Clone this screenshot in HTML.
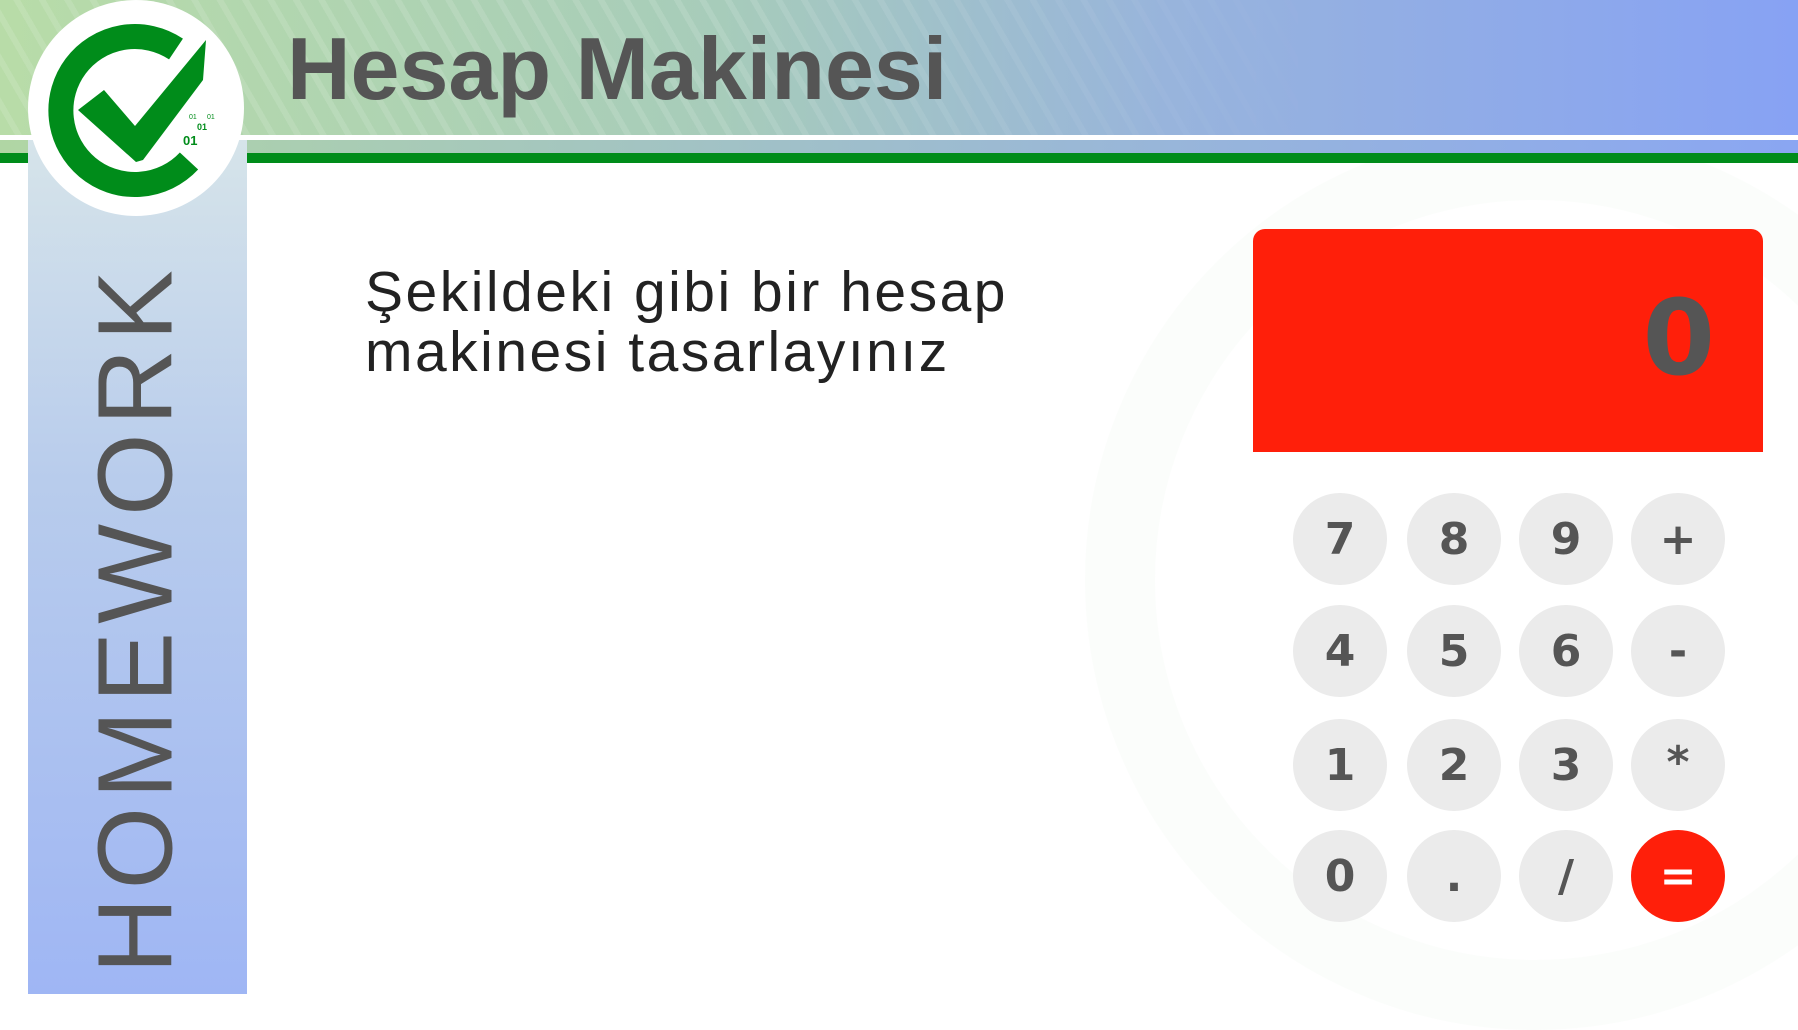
<!DOCTYPE html>
<html><head><meta charset="utf-8"><style>
html,body{margin:0;padding:0}
body{width:1798px;height:994px;position:relative;overflow:hidden;background:#fff;font-family:"Liberation Sans",sans-serif}
.hdr{position:absolute;left:0;top:0;width:1798px;height:135px;background:linear-gradient(90deg,#b8dca8 0%,#a7ccba 40%,#98b4dc 65%,#87a2f4 100%)}
.stripes{position:absolute;left:0;top:0;width:1798px;height:153px;background:repeating-linear-gradient(60deg,rgba(255,255,255,0.12) 0 6px,rgba(255,255,255,0) 6px 22px);-webkit-mask-image:linear-gradient(90deg,#000 0%,#000 40%,transparent 75%);mask-image:linear-gradient(90deg,#000 0%,#000 40%,transparent 75%)}
.wl{position:absolute;left:0;top:135px;width:1798px;height:5px;background:#fff}
.band{position:absolute;left:0;top:140px;width:1798px;height:13px;background:linear-gradient(90deg,#b0d6a4,#9ab8d6 60%,#8aa6f2)}
.gl{position:absolute;left:0;top:153px;width:1798px;height:10px;background:#008c1a}
.side{position:absolute;left:28px;top:140px;width:219px;height:854px;background:linear-gradient(180deg,#d6e4ea 0%,#b8ccec 40%,#9fb6f4 100%)}
.hw{position:absolute;left:136px;top:618px;transform:translate(-50%,-50%) rotate(-90deg);font-size:106px;color:#555;letter-spacing:8px;white-space:nowrap;font-weight:300}
.title{position:absolute;left:287px;top:19px;font-size:88px;font-weight:bold;color:#555;line-height:100px}
.body{position:absolute;left:365px;top:262px;font-size:57px;color:#222;line-height:60px;letter-spacing:2.5px}
.disp{position:absolute;left:1253px;top:229px;width:510px;height:223px;background:#ff1f0a;border-radius:12px 12px 0 0}
.disp span{position:absolute;right:48px;top:48px;font-size:104px;font-weight:bold;color:#555;font-family:"DejaVu Sans","Liberation Sans",sans-serif}
.b{position:absolute;width:94px;height:92px;border-radius:50%;background:#ebebeb;color:#555;font-family:"DejaVu Sans",sans-serif;font-weight:bold;font-size:44px;display:flex;align-items:center;justify-content:center}
.eq{background:#ff1f0a;color:#fff}
.ring{position:absolute;left:1085px;top:130px;width:900px;height:900px;border-radius:50%;border:70px solid rgba(225,240,225,0.15);box-sizing:border-box}
</style></head><body>
<div class="ring"></div>
<div class="hdr"></div>
<div class="stripes"></div>
<div class="wl"></div>
<div class="band"></div>
<div class="gl"></div>
<div class="side"></div>
<div class="hw">HOMEWORK</div>
<svg style="position:absolute;left:0;top:0" width="260" height="230">
<circle cx="136" cy="108" r="108" fill="#fff"/>
<path d="M176 49 A74 74 0 1 0 189 161" fill="none" stroke="#008c1a" stroke-width="25"/>
<polygon points="78,110 104,90 135,126 206,40 203,80 143,160 136,162" fill="#008c1a"/>
<text x="183" y="145" font-size="13" font-weight="bold" fill="#008c1a" font-family="Liberation Sans">01</text>
<text x="197" y="130" font-size="9" font-weight="bold" fill="#008c1a" font-family="Liberation Sans">01</text>
<text x="189" y="119" font-size="7" fill="#008c1a" font-family="Liberation Sans">01</text>
<text x="207" y="119" font-size="7" fill="#008c1a" font-family="Liberation Sans">01</text>
</svg>
<div class="title">Hesap Makinesi</div>
<div class="body">Şekildeki gibi bir hesap<br>makinesi tasarlayınız</div>
<div class="disp"><span>0</span></div>
<div class="b" style="left:1293px;top:493px">7</div>
<div class="b" style="left:1407px;top:493px">8</div>
<div class="b" style="left:1519px;top:493px">9</div>
<div class="b" style="left:1631px;top:493px">+</div>
<div class="b" style="left:1293px;top:605px">4</div>
<div class="b" style="left:1407px;top:605px">5</div>
<div class="b" style="left:1519px;top:605px">6</div>
<div class="b" style="left:1631px;top:605px">-</div>
<div class="b" style="left:1293px;top:719px">1</div>
<div class="b" style="left:1407px;top:719px">2</div>
<div class="b" style="left:1519px;top:719px">3</div>
<div class="b" style="left:1631px;top:719px;align-items:flex-start"><span style="margin-top:18px">*</span></div>
<div class="b" style="left:1293px;top:830px">0</div>
<div class="b" style="left:1407px;top:830px">.</div>
<div class="b" style="left:1519px;top:830px">/</div>
<div class="b eq" style="left:1631px;top:830px">=</div>
</body></html>
